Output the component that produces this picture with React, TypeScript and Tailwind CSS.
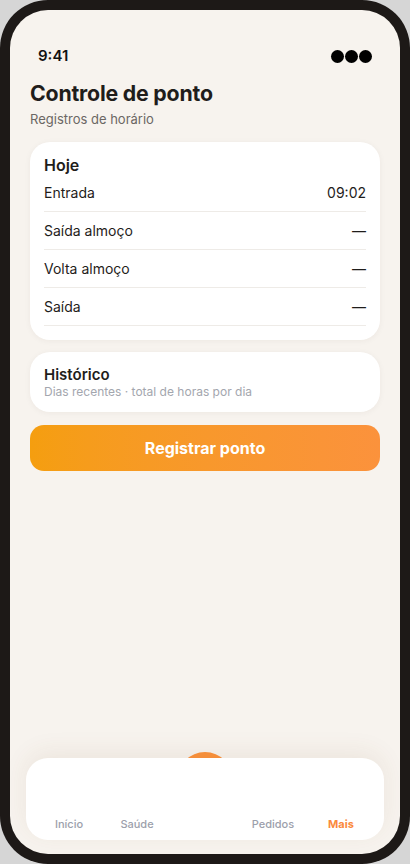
export default function App() {
  const rows = [
    { label: "Entrada", value: "09:02" },
    { label: "Saída almoço", value: "—" },
    { label: "Volta almoço", value: "—" },
    { label: "Saída", value: "—" },
  ];
  const tabs = ["Início", "Saúde", "", "Pedidos", "Mais"];

  return (
    <div
      className="w-[410px] h-[864px] bg-[#d6d6d6] overflow-hidden"
      style={{ fontFamily: "Inter, 'Noto Sans', sans-serif" }}
    >
      <div className="h-[864px] rounded-[48px] bg-[#1d1917] p-[10px]">
        <div className="relative flex h-[844px] flex-col overflow-hidden rounded-[38px] bg-[#f7f3ee]">
          {/* Status bar */}
          <div className="flex items-center justify-between px-[28px] pt-[35px]">
            <span className="text-[15px] font-semibold text-[#111]">9:41</span>
            <div className="flex gap-[1px]">
              <span className="h-[13px] w-[13px] rounded-full bg-black" />
              <span className="h-[13px] w-[13px] rounded-full bg-black" />
              <span className="h-[13px] w-[13px] rounded-full bg-black" />
            </div>
          </div>

          <div className="px-[20px] pt-[11px]">
            <h1 className="text-[21.3px] font-bold leading-[28px] text-[#1f1d1b] tracking-[-0.2px]">
              Controle de ponto
            </h1>
            <p className="mt-[3px] text-[13px] leading-[18px] text-[#6b6764]">Registros de horário</p>

            {/* Today card */}
            <div className="mt-[14px] rounded-[20px] bg-white px-[14px] pt-[14px] pb-[14px] shadow-[0_1px_6px_rgba(60,40,20,0.05)]">
              <h2 className="text-[16px] font-semibold leading-[18px] text-[#1f1d1b]">Hoje</h2>
              <div>
                {rows.map((r) => (
                  <div
                    key={r.label}
                    className="flex h-[38px] items-center justify-between border-b border-[#eeebe7] text-[14px] text-[#1f1d1b]"
                  >
                    <span>{r.label}</span>
                    <span>{r.value}</span>
                  </div>
                ))}
              </div>
            </div>

            {/* History card */}
            <div className="mt-[12px] rounded-[20px] bg-white px-[14px] pt-[14px] pb-[13px] shadow-[0_1px_6px_rgba(60,40,20,0.05)]">
              <h2 className="text-[15px] font-semibold leading-[18px] text-[#1f1d1b]">Histórico</h2>
              <p className="text-[12px] leading-[15px] text-[#a3a6ae]">Dias recentes · total de horas por dia</p>
            </div>

            <button className="mt-[13px] flex h-[46px] w-full items-center justify-center rounded-[14px] bg-gradient-to-r from-[#f59e0f] to-[#fb923c] text-[16px] font-bold text-white">
              Registrar ponto
            </button>
          </div>

          <div className="flex-1" />

          {/* Bottom nav */}
          <div className="relative mx-[16px] mb-[14px]">
            <div className="absolute left-1/2 top-[-6px] h-[56px] w-[56px] -translate-x-1/2 rounded-full bg-[#fb923c]" />
            <div className="relative grid h-[82px] grid-cols-5 rounded-[22px] bg-white px-[9px] pb-[8px] shadow-[0_-6px_24px_rgba(120,80,40,0.08)]">
              {tabs.map((t, i) => (
                <div key={i} className="flex items-end justify-center">
                  <span
                    className={
                      i === 4
                        ? "text-[11px] font-bold text-[#fb8a3c]"
                        : "text-[11px] font-medium text-[#9ca0ab]"
                    }
                  >
                    {t}
                  </span>
                </div>
              ))}
            </div>
          </div>
        </div>
      </div>
    </div>
  );
}
